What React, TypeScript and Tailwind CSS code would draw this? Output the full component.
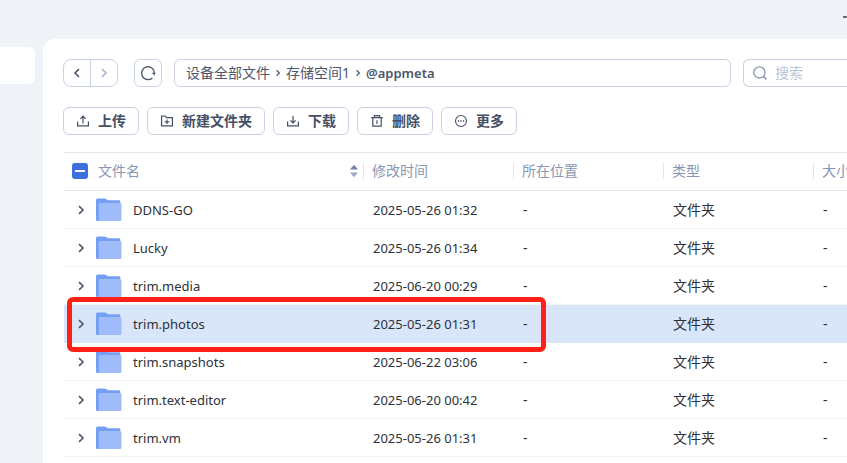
import type { ReactNode } from "react";

type Entry = { name: string; modified: string; selected?: boolean };

const entries: Entry[] = [
  { name: "DDNS-GO", modified: "2025-05-26 01:32" },
  { name: "Lucky", modified: "2025-05-26 01:34" },
  { name: "trim.media", modified: "2025-06-20 00:29" },
  { name: "trim.photos", modified: "2025-05-26 01:31", selected: true },
  { name: "trim.snapshots", modified: "2025-06-22 03:06" },
  { name: "trim.text-editor", modified: "2025-06-20 00:42" },
  { name: "trim.vm", modified: "2025-05-26 01:31" },
];

function Icon({ children, className = "size-[14px]" }: { children: ReactNode; className?: string }) {
  return (
    <svg
      viewBox="0 0 14 14"
      className={`shrink-0 ${className}`}
      fill="none"
      stroke="currentColor"
      strokeWidth="1.2"
      aria-hidden="true"
    >
      {children}
    </svg>
  );
}

function Chevron({ left = false, className }: { left?: boolean; className?: string }) {
  return (
    <Icon className={className}>
      <path d={left ? "M9 3.2 5 7l4 3.8" : "m5 3.2 4 3.8-4 3.8"} strokeWidth="1.6" />
    </Icon>
  );
}

function Folder() {
  return (
    <svg viewBox="0 0 26 24" className="h-6 w-[26px] shrink-0" aria-hidden="true">
      <path d="M0 2Q0 .4 1.600.4H8.500C10.500.4 11 2.300 13 2.300H23Q24.300 2.300 24.300 3.600V23H1.200Q0 23 0 21.800Z" fill="#74a0f4" />
      <path d="M4.200 5H23.800Q25.500 5 25.500 6.700V21.500Q25.500 23 24 23H2.800V6.400Q2.800 5 4.200 5Z" fill="#a0bbf9" />
    </svg>
  );
}

function ToolButton({ label, children }: { label: string; children: ReactNode }) {
  return (
    <button className="flex h-7 shrink-0 items-center gap-2 rounded-md border border-[#c9d3e2] px-3 text-[14px] leading-5 font-bold text-[#465065]">
      <Icon>{children}</Icon>
      {label}
    </button>
  );
}

function HeaderCell({ children }: { children: ReactNode }) {
  return (
    <th scope="col" className="border-y border-[#e3e7ed] p-0 text-left font-normal">
      <div className="-ml-px flex h-4 items-center border-l border-[#dfe4ec] pl-2 leading-4 whitespace-nowrap">
        {children}
      </div>
    </th>
  );
}

export default function App() {
  return (
    <div className="flex min-h-screen overflow-hidden bg-[#eff3f8] font-['Noto_Sans','Noto_Sans_CJK_SC',sans-serif] text-[14px] leading-5">
      <aside className="w-[43px] shrink-0 pt-[47px]">
        <div className="mr-2 h-[37px] rounded-r-md bg-white" />
      </aside>
      <div className="flex min-w-0 flex-1 flex-col">
        <header className="flex h-[39px] shrink-0 justify-end">
          <button aria-label="最小化" className="flex h-[34px] w-1 items-center">
            <span className="h-[2px] w-full bg-[#666b75]" />
          </button>
        </header>
        <main className="flex-1 overflow-hidden rounded-tl-xl bg-white pt-5 pl-5">
          <nav className="flex items-center text-[#4d576b]">
            <div className="flex h-7 w-[55px] shrink-0 rounded-lg border border-[#c9d3e2]">
              <button aria-label="后退" className="flex flex-1 items-center justify-center">
                <Chevron left className="size-[14px]" />
              </button>
              <button
                aria-label="前进"
                className="flex flex-1 items-center justify-center border-l border-[#c9d3e2] text-[#a9b6cd]"
              >
                <Chevron className="size-[14px]" />
              </button>
            </div>
            <button
              aria-label="刷新"
              className="ml-4 flex size-7 shrink-0 items-center justify-center rounded-md border border-[#c9d3e2]"
            >
              <Icon className="size-4">
                <path d="M10.800 11.300A5.600 5.600 0 1 1 12.600 7.500" strokeWidth="1.2" />
                <path d="M10.400 6.800h3.300L12.500 9.200Z" fill="currentColor" stroke="none" />
              </Icon>
            </button>
            <div className="ml-3 flex h-7 min-w-0 flex-1 items-center gap-[3px] rounded-md border border-[#c9d3e2] px-[11px] whitespace-nowrap">
              <a href="#root">设备全部文件</a>
              <Chevron className="size-[10px]" />
              <a href="#volume">存储空间1</a>
              <Chevron className="size-[10px]" />
              <span className="text-[13px] font-semibold">@appmeta</span>
            </div>
            <label className="ml-3 flex h-7 w-[104px] shrink-0 items-center gap-2 rounded-l-md border border-r-0 border-[#c9d3e2] pl-[9px] text-[#8797b3]">
              <Icon className="size-[14px]">
                <circle cx="6.400" cy="6.400" r="5.600" strokeWidth="1.300" />
                <path d="m10.400 10.400 3 3" strokeWidth="1.500" />
              </Icon>
              <input
                type="search"
                aria-label="搜索"
                placeholder="搜索"
                className="w-full min-w-0 outline-none placeholder:text-[#b9c4d6]"
              />
            </label>
          </nav>

          <div className="mt-5 flex gap-2">
            <ToolButton label="上传">
              <path d="M1.600 7.500v4.400h10.800V7.500M7 9.600V2.400M4.400 4.800 7 2.200l2.600 2.600" />
            </ToolButton>
            <ToolButton label="新建文件夹">
              <path d="M1.600 2h3.600l1.400 1.600h5.800v8.300H1.600ZM7 5.500v4.600M4.700 7.800h4.600" />
            </ToolButton>
            <ToolButton label="下载">
              <path d="M1.600 7.500v4.400h10.800V7.500M7 2v6.800M4.400 6.400 7 9l2.600-2.600" />
            </ToolButton>
            <ToolButton label="删除">
              <path d="M1.200 3.600h11.600M4.400 3.400V1.600h5.200v1.800M2.800 3.600v8.600h8.400V3.600M7 6.200v3.800" />
            </ToolButton>
            <ToolButton label="更多">
              <circle cx="7" cy="7" r="5.500" strokeWidth="1.100" />
              <path d="M3.800 7h1.300M6.350 7h1.300M8.900 7h1.300" strokeWidth="1.300" />
            </ToolButton>
          </div>

          <div className="mt-[17px] pb-[6px] pl-px">
            <table className="w-full table-fixed border-separate border-spacing-0 text-[#2e3138]">
              <colgroup>
                <col className="w-[300px]" />
                <col className="w-[150px]" />
                <col className="w-[150px]" />
                <col className="w-[150px]" />
                <col />
              </colgroup>
              <thead>
                <tr className="h-[39px] text-[#8797b3] *:pb-[2px]">
                  <th scope="col" className="border-y border-[#e3e7ed] p-0 text-left font-normal">
                    <div className="flex items-center pr-[5px] pl-2 leading-4">
                      <input
                        id="select-all"
                        type="checkbox"
                        className="flex size-4 appearance-none items-center justify-center rounded-[3px] bg-[#3d70dd] before:h-[2px] before:w-[10px] before:bg-white"
                      />
                      <label htmlFor="select-all" className="ml-[10px] flex-1">
                        文件名
                      </label>
                      <button aria-label="排序" className="flex">
                        <svg viewBox="0 0 10 14" className="h-[14px] w-[10px]" aria-hidden="true">
                          <path d="M1 5.500h8L5 .8Z" fill="#7183a6" />
                          <path d="M1 8.500h8L5 13.200Z" fill="#9dacc6" />
                        </svg>
                      </button>
                    </div>
                  </th>
                  <HeaderCell>修改时间</HeaderCell>
                  <HeaderCell>所在位置</HeaderCell>
                  <HeaderCell>类型</HeaderCell>
                  <HeaderCell>大小</HeaderCell>
                </tr>
              </thead>
              <tbody>
                {entries.map((entry) => (
                  <tr
                    key={entry.name}
                    className={`h-[38px] *:border-b *:p-0 ${
                      entry.selected ? "bg-[#d9e5f9] *:border-[#d9e5f9]" : "*:border-[#f1f3f6]"
                    }`}
                  >
                    <td className="relative">
                      <div className="flex items-center pl-[10px] text-[13px]">
                        <button aria-label={`展开 ${entry.name}`} className="flex text-[#4d576b]">
                          <Chevron className="size-[14px]" />
                        </button>
                        <span className="ml-2 flex">
                          <Folder />
                        </span>
                        <span className="ml-[11px]">{entry.name}</span>
                      </div>
                      {entry.selected && (
                        <span className="pointer-events-none absolute -top-2 left-[3px] z-10 h-[55px] w-[479px] rounded-md border-5 border-[#ff2016]" />
                      )}
                    </td>
                    <td>
                      <div className="pl-[9px] text-[13px]">{entry.modified}</div>
                    </td>
                    <td>
                      <div className="pl-[9px]">-</div>
                    </td>
                    <td>
                      <div className="pl-[9px]">文件夹</div>
                    </td>
                    <td>
                      <div className="pl-[9px]">-</div>
                    </td>
                  </tr>
                ))}
              </tbody>
            </table>
          </div>
        </main>
      </div>
    </div>
  );
}
